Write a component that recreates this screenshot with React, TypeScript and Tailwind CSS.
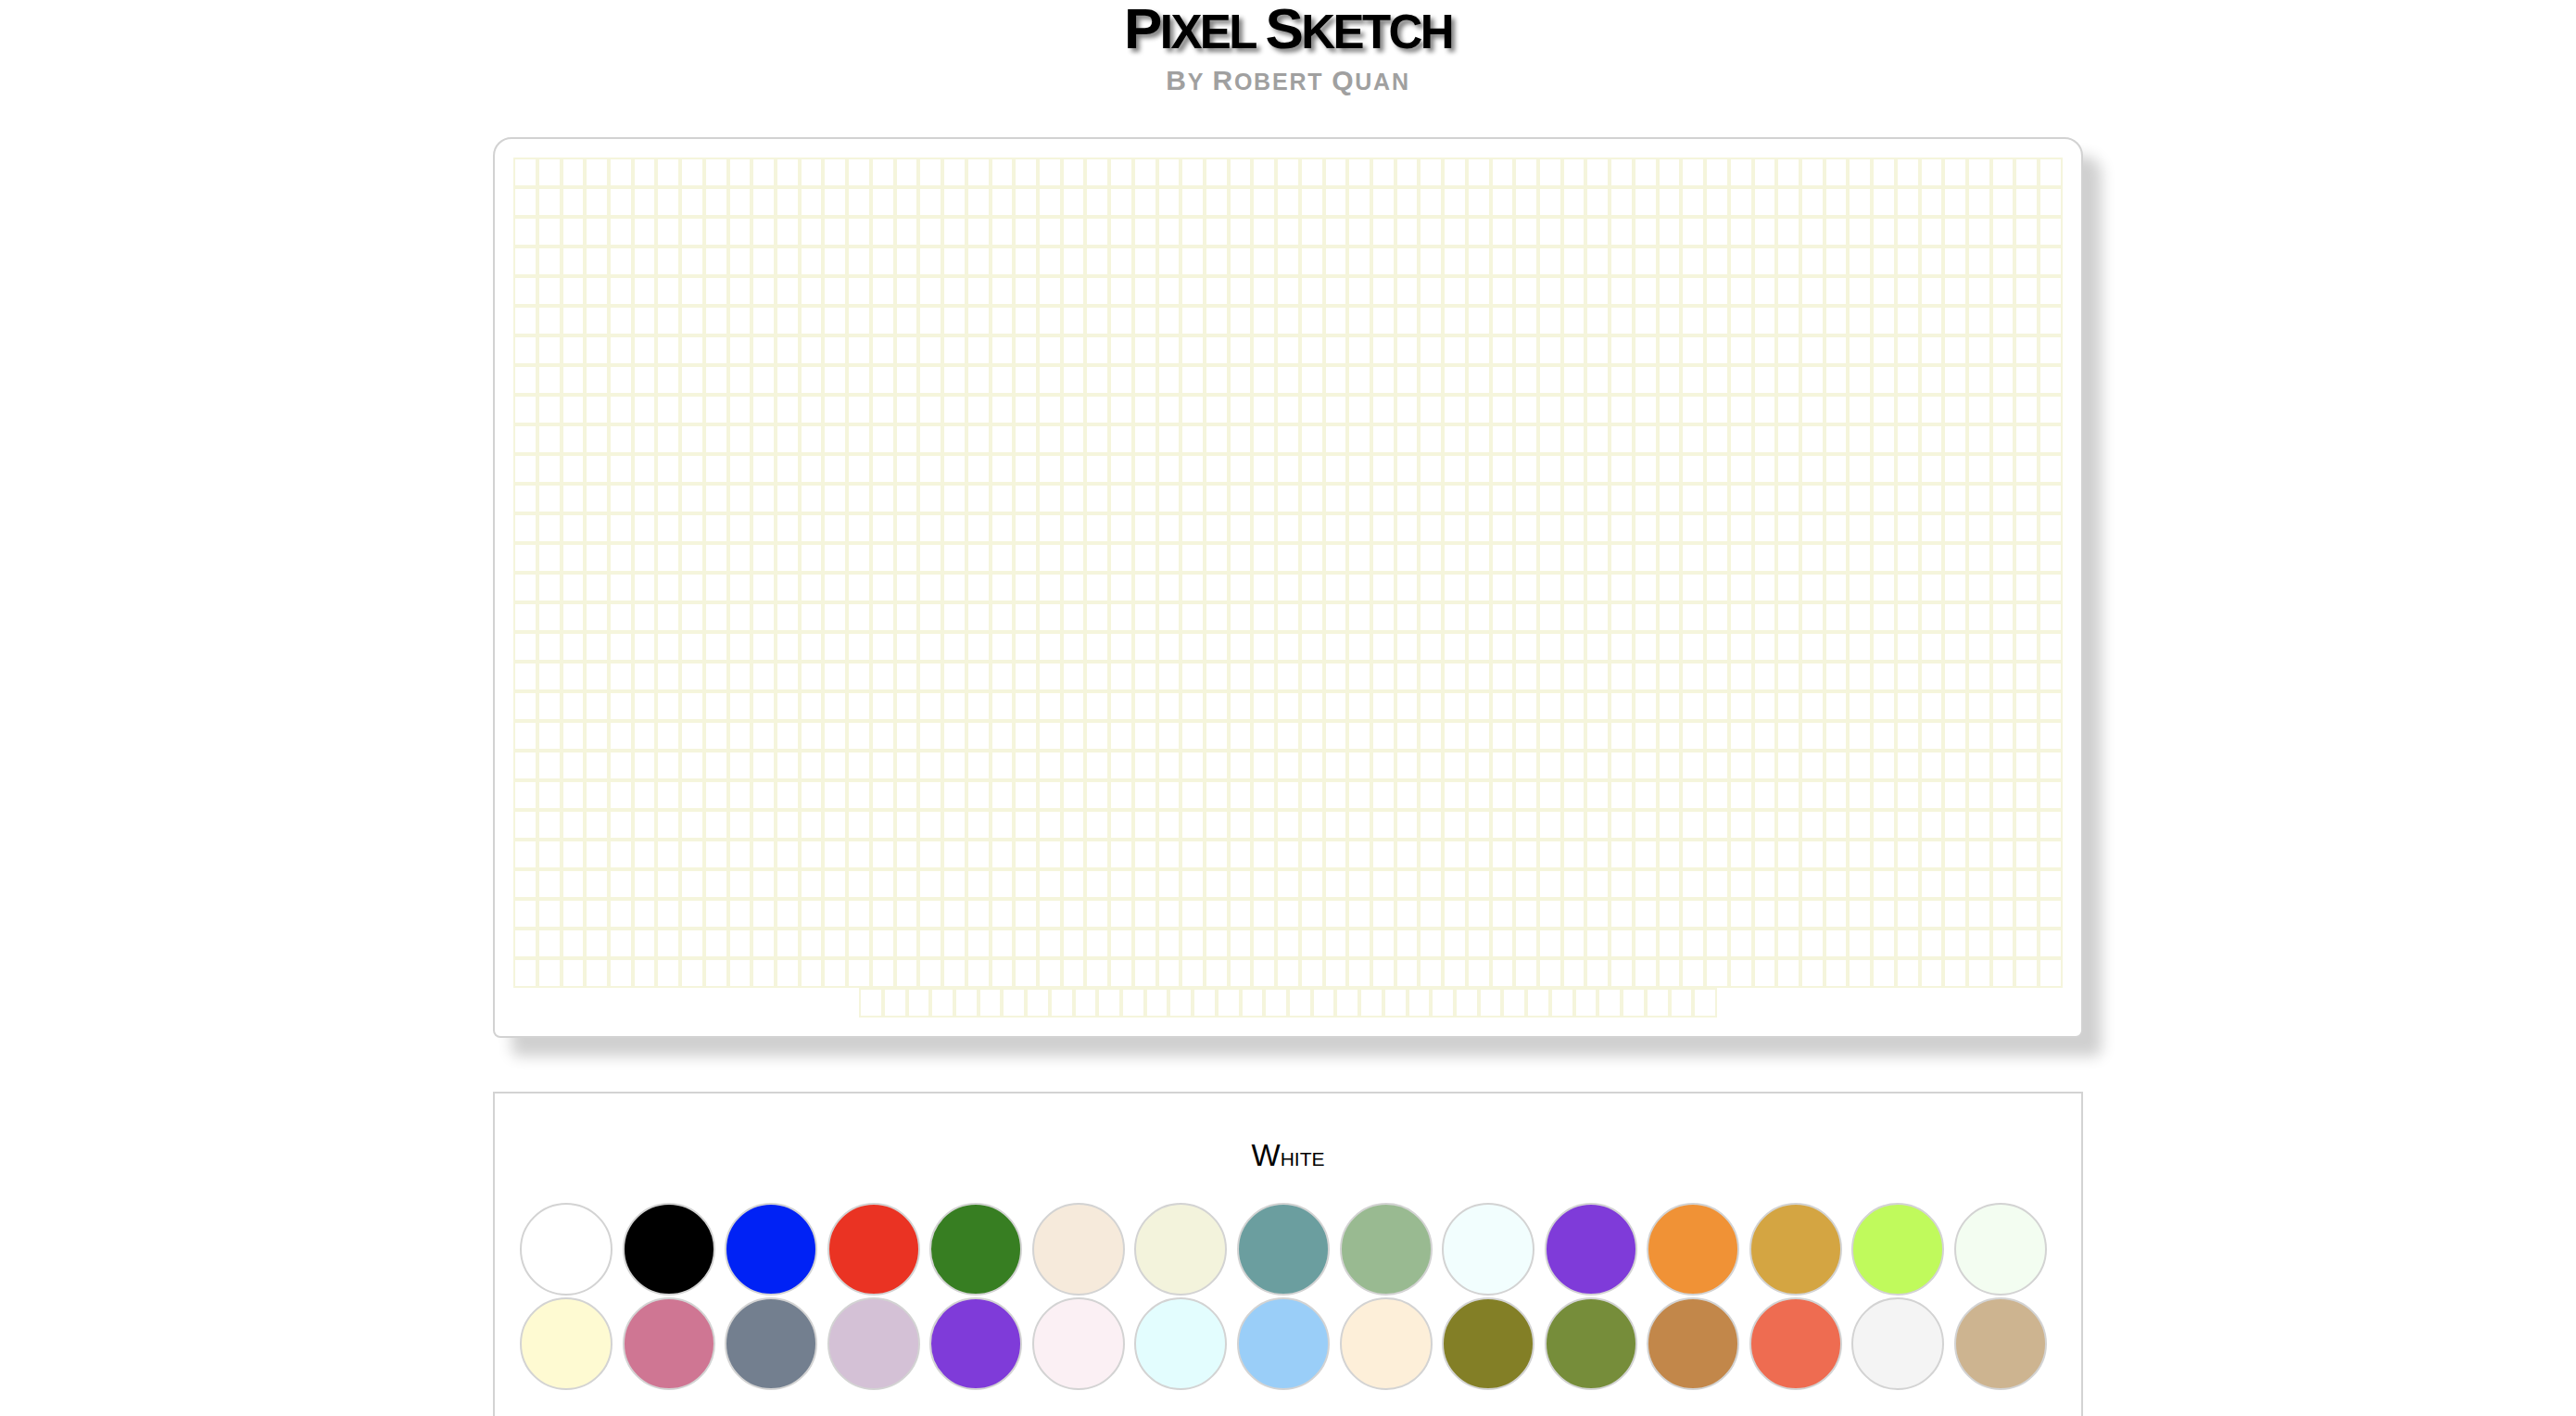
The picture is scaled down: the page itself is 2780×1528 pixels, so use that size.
import React from "react";

const ROW1 = [
  "#ffffff", "#000000", "#0022f5", "#ea3323", "#377e22", "#f6eadb", "#f3f3dc", "#6b9e9f",
  "#99ba91", "#f2fefe", "#7f3bd9", "#f09236", "#d4a542", "#c0fa5c", "#f3fdf1",
];
const ROW2 = [
  "#fefad2", "#cf7693", "#737f8f", "#d4c1d6", "#7f3bd9", "#fbf0f4", "#e3fdfe", "#9acef8",
  "#fdefd9", "#837f26", "#768d3a", "#c2874a", "#ee6c51", "#f4f4f4", "#cdb490",
];

const CELLS = Array.from({ length: 1856 }, (_, i) => i);

function SmallCaps({ text, big, small, className }: { text: string; big: number; small: number; className?: string }) {
  const words = text.split(" ");
  return (
    <>
      {words.map((w, wi) => (
        <React.Fragment key={wi}>
          {wi > 0 ? <span style={{ fontSize: small }}> </span> : null}
          <span style={{ fontSize: big }} className={className}>{w[0]}</span>
          <span style={{ fontSize: small }} className={"uppercase leading-none " + (className ?? "")}>{w.slice(1)}</span>
        </React.Fragment>
      ))}
    </>
  );
}

export default function App() {
  return (
    <div className="min-h-screen bg-white font-['Liberation_Sans',Arial,sans-serif] pb-[60px]">
      <div className="h-[62px] text-center leading-[62px] text-[62px] font-bold text-black tracking-[-2.6px] whitespace-nowrap [text-shadow:4px_4px_5px_#808080]">
        <SmallCaps text="Pixel Sketch" big={62} small={51} />
      </div>
      <div className="mt-[10px] h-[30px] text-center leading-[30px] text-[30px] font-bold text-[#a0a0a0] tracking-[1.8px] whitespace-nowrap">
        <SmallCaps text="By Robert Quan" big={30} small={25} />
      </div>

      <div className="mx-auto mt-[46px] w-[1716px] rounded-t-[20px] rounded-b-[8px] border-2 border-[#d2d2d2] bg-white px-[20px] pt-[20px] pb-[20px] shadow-[20px_20px_15px_#d0d0d0]">
        <div className="flex w-[1672px] flex-wrap justify-center">
          {CELLS.map((i) => (
            <div key={i} className="h-[32px] w-[25.72px] border-2 border-[#f5f5dc] bg-white" />
          ))}
        </div>
      </div>

      <div className="mx-auto mt-[58px] w-[1716px] border-2 border-[#d3d3d3] bg-white pt-[50px] pb-[40px]">
        <div className="h-[33px] text-center leading-none text-[33px] text-black whitespace-nowrap">
          <SmallCaps text="White" big={33} small={21} />
        </div>
        <div className="mt-[35px] pl-[27px] grid grid-cols-[repeat(15,100px)] gap-x-[10.57px] gap-y-[2px]">
          {[...ROW1, ...ROW2].map((c, i) => (
            <div
              key={i}
              className="h-[100px] w-[100px] rounded-full border-2 border-[#d3d3d3]"
              style={{ backgroundColor: c }}
            />
          ))}
        </div>
      </div>
    </div>
  );
}
